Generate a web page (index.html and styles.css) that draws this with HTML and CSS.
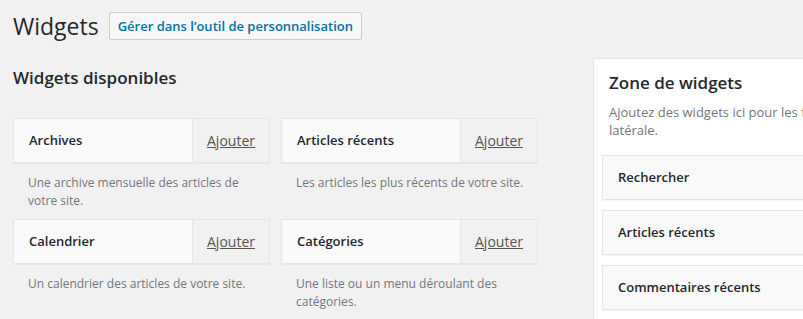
FILE: index.html
```html
<!DOCTYPE html>
<html lang="fr">
<head>
    <meta charset="UTF-8">
    <title>Widgets</title>
    <link rel="stylesheet" href="styles.css">
</head>
<body>
    <div class="wrap">
        <div class="page-head">
            <h1>Widgets</h1>
            <a class="btn" href="#">Gérer dans l’outil de personnalisation</a>
        </div>

        <div class="main">
            <div class="available">
                <h2>Widgets disponibles</h2>
                <ul class="widget-list">
                    <li>
                        <div class="widget">
                            <span class="widget-title">Archives</span>
                            <a class="widget-add" href="#">Ajouter</a>
                        </div>
                        <p class="widget-desc">Une archive mensuelle des articles de votre site.</p>
                    </li>
                    <li>
                        <div class="widget">
                            <span class="widget-title">Articles récents</span>
                            <a class="widget-add" href="#">Ajouter</a>
                        </div>
                        <p class="widget-desc">Les articles les plus récents de votre site.</p>
                    </li>
                    <li>
                        <div class="widget">
                            <span class="widget-title">Calendrier</span>
                            <a class="widget-add" href="#">Ajouter</a>
                        </div>
                        <p class="widget-desc">Un calendrier des articles de votre site.</p>
                    </li>
                    <li>
                        <div class="widget">
                            <span class="widget-title">Catégories</span>
                            <a class="widget-add" href="#">Ajouter</a>
                        </div>
                        <p class="widget-desc">Une liste ou un menu déroulant des catégories.</p>
                    </li>
                </ul>
            </div>

            <div class="sidebar">
                <h2>Zone de widgets</h2>
                <p class="sidebar-desc">Ajoutez des widgets ici pour les faire apparaître dans votre colonne latérale.</p>
                <div class="placed">Rechercher</div>
                <div class="placed">Articles récents</div>
                <div class="placed">Commentaires récents</div>
            </div>
        </div>
    </div>
</body>
</html>
```

FILE: styles.css
```css
html {
    overflow: hidden;
}
body, h1, h2, p, ul, li {
    margin: 0;
    padding: 0;
}
body {
    background: #f1f1f1;
    color: #23282d;
    font-family: "Open Sans", "Liberation Sans", sans-serif;
    font-size: 13px;
}
.wrap {
    padding: 12px 0 0 13px;
}
.page-head {
    display: flex;
    align-items: center;
    gap: 10px;
}
h1 {
    font-size: 23px;
    font-weight: 400;
    line-height: 28px;
}
.btn {
    display: inline-block;
    height: 28px;
    line-height: 26px;
    box-sizing: border-box;
    padding: 0 8px;
    border: 1px solid #ccc;
    border-radius: 2px;
    background: #f7f7f7;
    color: #0073aa;
    text-decoration: none;
    font-size: 13px;
    font-weight: 600;
}
.main {
    display: flex;
    align-items: flex-start;
}
.available {
    width: 525px;
    flex-shrink: 0;
}
.available h2 {
    font-size: 17px;
    font-weight: 600;
    line-height: 24px;
    margin: 26px 0 28px;
}
.widget-list {
    list-style: none;
    display: grid;
    grid-template-columns: 257px 257px;
    column-gap: 11px;
}
.widget {
    display: flex;
    height: 45px;
    box-sizing: border-box;
    border: 1px solid #e5e5e5;
    background: #fafafa;
    box-shadow: 0 1px 1px rgba(0, 0, 0, .04);
}
.widget-title {
    flex: 1;
    padding-left: 15px;
    line-height: 43px;
    font-weight: 600;
}
.widget-add {
    width: 76px;
    text-align: center;
    line-height: 43px;
    border-left: 1px solid #e5e5e5;
    background: #f1f1f1;
    color: #555;
    font-size: 14px;
}
.widget-desc {
    color: #72777c;
    font-size: 12px;
    line-height: 18px;
    padding: 11px 8px 9px 15px;
}
.sidebar {
    flex-shrink: 0;
    width: 460px;
    margin: 18px 0 0 55px;
    box-sizing: border-box;
    padding: 13px 8px 20px;
    background: #fff;
    border: 1px solid #e5e5e5;
}
.sidebar h2 {
    font-size: 17px;
    font-weight: 600;
    line-height: 22px;
    padding: 0 7px;
}
.sidebar-desc {
    color: #72777c;
    line-height: 18px;
    padding: 9px 7px 0;
    margin-bottom: 16px;
}
.placed {
    height: 45px;
    box-sizing: border-box;
    border: 1px solid #e5e5e5;
    background: #f9f9f9;
    box-shadow: 0 1px 1px rgba(0, 0, 0, .04);
    padding-left: 15px;
    line-height: 43px;
    font-weight: 600;
    margin-bottom: 10px;
}
```
